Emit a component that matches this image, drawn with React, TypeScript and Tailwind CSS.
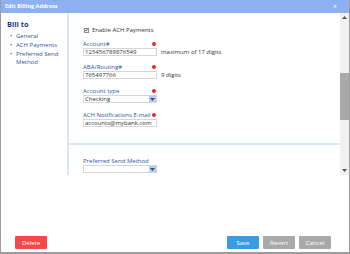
import React from 'react';

const font = { fontFamily: '"Open Sans", "DejaVu Sans", sans-serif' };

const Label: React.FC<{ text: string; required?: boolean }> = ({ text, required }) => (
  <div className="flex items-center justify-between w-[74px] h-[7px] mb-[1px]">
    <span className="text-[6px] leading-none text-[#2f55a4]">{text}</span>
    {required && <span className="w-[4px] h-[4px] rounded-full bg-[#e8262b] mr-[1px]" />}
  </div>
);

const Input: React.FC<{ value: string }> = ({ value }) => (
  <div className="w-[74px] h-[8px] border border-[#d6d6d6] bg-white flex items-center px-[1px] text-[6px] leading-none text-[#333]">
    {value}
  </div>
);

const Select: React.FC<{ value: string }> = ({ value }) => (
  <div className="w-[74px] h-[8px] border border-[#d6d6d6] bg-white flex items-center text-[6px] leading-none text-[#333]">
    <span className="flex-1 px-[1px]">{value}</span>
    <span className="w-[7px] h-full bg-[#b9cdef] flex items-center justify-center">
      <svg width="5" height="3" viewBox="0 0 5 3">
        <path d="M0 0 L5 0 L2.5 3 Z" fill="#3a4f7a" />
      </svg>
    </span>
  </div>
);

export default function App() {
  return (
    <div style={font} className="w-[350px] h-[254px] bg-white flex flex-col border-x border-[#9c9c9c]">
      <div className="h-[13px] bg-[#8cb0f2] flex items-center justify-between px-[4px]">
        <span className="text-white font-bold text-[5.5px] leading-none">Edit Billing Address</span>
        <span className="text-white text-[7px] leading-none mr-[8px]">×</span>
      </div>
      <div className="flex h-[162px]">
        <div className="w-[68px] border-r-2 border-[#dbe6f6] pl-[6px] pt-[8px]">
          <div className="text-[7.5px] font-bold text-[#1d3a86] leading-none mb-[3px]">Bill to</div>
          <ul className="text-[6px] leading-[9px] text-[#2f55a4]">
            <li className="flex"><span className="w-[9px] pl-[3px]">•</span>General</li>
            <li className="flex"><span className="w-[9px] pl-[3px]">•</span>ACH Payments</li>
            <li className="flex"><span className="w-[9px] pl-[3px] shrink-0">•</span><span className="leading-[8px] pt-[0.5px]">Preferred Send<br />Method</span></li>
          </ul>
        </div>
        <div className="flex-1 flex">
          <div className="flex-1 flex flex-col">
            <div className="pl-[14px] pt-[14px] h-[132px] border-b-2 border-[#dbe6f6]">
              <div className="flex items-center gap-[3px] ml-[1px] mb-[7px]">
                <span className="w-[5px] h-[5px] border border-[#888] bg-[#eee] flex items-center justify-center">
                  <svg width="4" height="4" viewBox="0 0 4 4"><path d="M0.5 2 L1.5 3.2 L3.5 0.6" stroke="#222" strokeWidth="0.9" fill="none" /></svg>
                </span>
                <span className="text-[6px] leading-none text-[#333]">Enable ACH Payments</span>
              </div>
              <Label text="Account#" required />
              <div className="flex items-center gap-[4px] mb-[7px]">
                <Input value="123456789876549" />
                <span className="text-[6px] leading-none text-[#333]">maximum of 17 digits</span>
              </div>
              <Label text="ABA/Routing#" required />
              <div className="flex items-center gap-[4px] mb-[8px]">
                <Input value="765497766" />
                <span className="text-[6px] leading-none text-[#333]">9 digits</span>
              </div>
              <Label text="Account type" required />
              <div className="mb-[8px]">
                <Select value="Checking" />
              </div>
              <Label text="ACH Notifications E-mail" required />
              <Input value="accounts@mybank.com" />
            </div>
            <div className="pl-[14px] pt-[12px]">
              <Label text="Preferred Send Method" />
              <Select value="" />
            </div>
          </div>
          <div className="w-[9px] bg-[#f0f0f0] flex flex-col items-center justify-between py-[3px] relative">
            <svg width="5" height="3" viewBox="0 0 5 3"><path d="M0 3 L5 3 L2.5 0 Z" fill="#555" /></svg>
            <div className="absolute left-0 top-[60px] w-[9px] h-[47px] bg-[#a9a9a9]" />
            <svg width="5" height="3" viewBox="0 0 5 3"><path d="M0 0 L5 0 L2.5 3 Z" fill="#555" /></svg>
          </div>
        </div>
      </div>
      <div className="flex-1 flex items-end justify-between px-[14px] pb-[3px] border-b-2 border-[#9c9c9c]">
        <button className="w-[32px] h-[13px] bg-[#f24a4a] text-white text-[6px] leading-none rounded-[1px]">Delete</button>
        <div className="flex gap-[4px] mr-[4px]">
          <button className="w-[32px] h-[13px] bg-[#3a9be3] text-white text-[6px] leading-none rounded-[1px]">Save</button>
          <button className="w-[32px] h-[13px] bg-[#a9a9a9] text-white text-[6px] leading-none rounded-[1px]">Revert</button>
          <button className="w-[32px] h-[13px] bg-[#a9a9a9] text-white text-[6px] leading-none rounded-[1px]">Cancel</button>
        </div>
      </div>
    </div>
  );
}
